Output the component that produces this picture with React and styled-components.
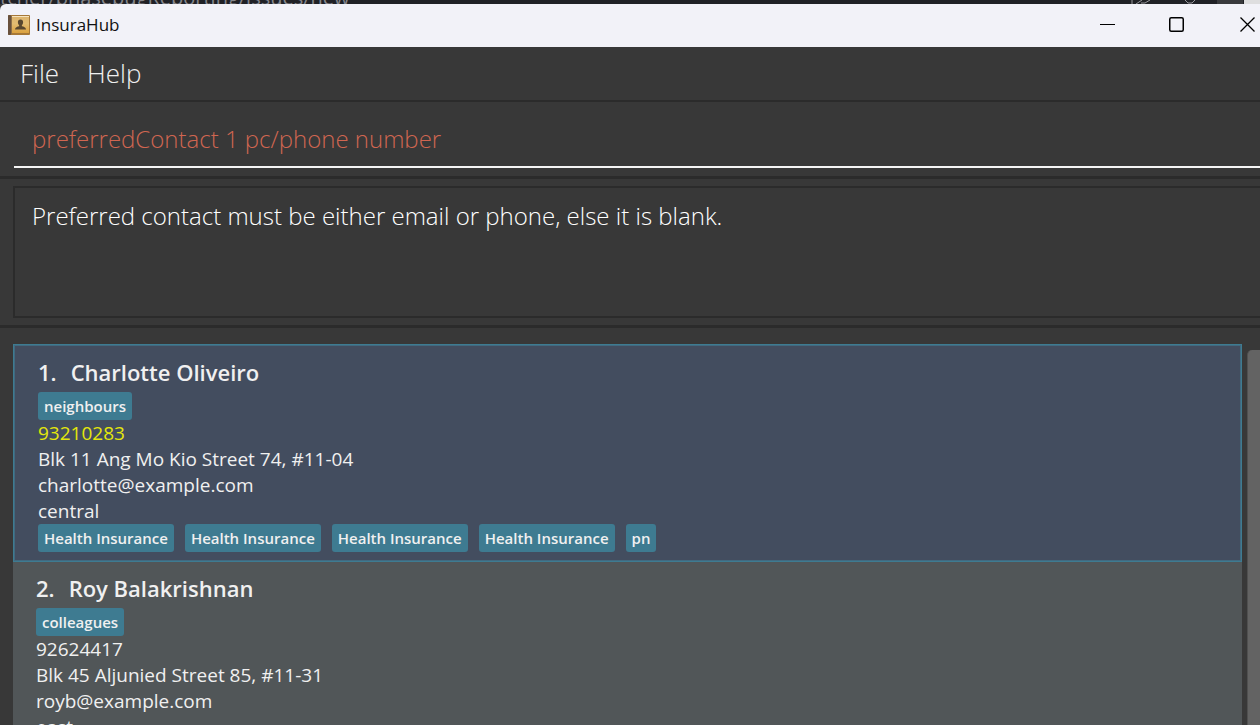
import React from "react";
import styled, { createGlobalStyle } from "styled-components";

const GlobalStyle = createGlobalStyle`
  *, *::before, *::after { box-sizing: border-box; }
  body {
    margin: 0;
    background: #383838;
    font-family: "Open Sans", "Noto Sans", sans-serif;
    overflow: hidden;
  }
`;

const Screen = styled.div`
  display: flex;
  flex-direction: column;
  height: 100vh;
  overflow: hidden;
`;

const Backdrop = styled.div`
  display: flex;
  align-items: flex-end;
  justify-content: space-between;
  flex: none;
  height: 4px;
  overflow: hidden;
  background: #202126;
  color: #85868c;
  font-size: 20px;
  line-height: 12px;
  white-space: nowrap;
`;

const BackdropIcons = styled.svg`
  flex: none;
  width: 130px;
  height: 4px;
`;

const TitleBar = styled.header`
  display: flex;
  align-items: center;
  flex: none;
  height: 43px;
  padding: 0 0 2px 8px;
  background: #f2f2f8;
  border-top-left-radius: 6px;
`;

const AppIcon = styled.svg`
  width: 22px;
  height: 22px;
  margin-right: 6px;
`;

const Title = styled.h1`
  flex: 1;
  margin: 0;
  color: #111;
  font-size: 17px;
  font-weight: 400;
  line-height: 24px;
`;

const WindowButton = styled.button`
  display: flex;
  align-items: center;
  justify-content: ${(p) => (p.$end ? "flex-end" : "center")};
  width: ${(p) => (p.$end ? "49px" : "69px")};
  height: 41px;
  padding: 0;
  padding-right: ${(p) => (p.$end ? "5px" : "0")};
  border: 0;
  background: transparent;
`;

const MenuBar = styled.nav`
  display: flex;
  align-items: center;
  flex: none;
  gap: 28px;
  height: 55px;
  padding: 0 0 2px 20px;
  border-bottom: 2px solid #2b2b2b;
`;

const MenuButton = styled.button`
  padding: 0;
  border: 0;
  background: transparent;
  color: #f0f0f0;
  font-family: inherit;
  font-size: 26px;
  font-weight: 300;
  line-height: 32px;
`;

const CommandPane = styled.form`
  flex: none;
  padding: 10px 0 8px 14px;
  border-bottom: 3px solid #2b2b2b;
`;

const CommandInput = styled.input`
  display: block;
  width: 100%;
  height: 56px;
  padding: 0 18px 2px;
  border: 0;
  border-bottom: 2px solid #f4f4f4;
  outline: 0;
  background: transparent;
  color: #d06651;
  font-family: inherit;
  font-size: 24px;
  font-weight: 300;
`;

const ResultPane = styled.section`
  flex: none;
  padding: 7px 0 7px 13px;
  border-bottom: 3px solid #2b2b2b;
`;

const ResultBox = styled.output`
  display: block;
  height: 132px;
  padding: 12px 17px;
  border: 2px solid #2b2b2b;
  border-right: 0;
  color: #fff;
  font-size: 24px;
  font-weight: 300;
  line-height: 32px;
`;

const ListPane = styled.main`
  display: flex;
  flex: 1;
  gap: 5px;
  min-height: 0;
  padding: 16px 0 0 13px;
  overflow: hidden;
`;

const PersonList = styled.ol`
  flex: 1;
  margin: 0;
  padding: 0;
  list-style: none;
`;

const PersonCard = styled.li`
  padding: ${(p) => (p.$selected ? "9px 24px" : "8px 23px")};
  border: ${(p) => (p.$selected ? "1px solid #3e7b91" : "0")};
  box-shadow: ${(p) => (p.$selected ? "inset 0 0 0 1px #416a80" : "none")};
  background: ${(p) => (p.$selected ? "#434d5f" : "#515658")};
  color: #f0f0f0;
`;

const PersonName = styled.h2`
  display: flex;
  gap: 14px;
  margin: 0;
  padding-bottom: 2px;
  font-size: 22px;
  font-weight: 600;
  line-height: 36px;
`;

const TagRow = styled.div`
  display: flex;
  gap: 11px;
`;

const Tag = styled.span`
  padding: 0 6px;
  border-radius: 3px;
  background: #3e7b91;
  font-size: 15px;
  font-weight: 600;
  line-height: 28px;
`;

const Detail = styled.p`
  margin: 0;
  color: ${(p) => (p.$preferred ? "#e4e70b" : "inherit")};
  font-size: 19px;
  line-height: 26px;
`;

const ScrollTrack = styled.div`
  display: flex;
  flex: none;
  width: 13px;
  padding-top: 6px;
`;

const ScrollThumb = styled.div`
  flex: 1;
  border-left: 1px solid #505050;
  border-top-left-radius: 5px;
  background: #636363;
`;

const people = [
  {
    name: "Charlotte Oliveiro",
    groups: ["neighbours"],
    phone: "93210283",
    address: "Blk 11 Ang Mo Kio Street 74, #11-04",
    email: "charlotte@example.com",
    region: "central",
    policies: ["Health Insurance", "Health Insurance", "Health Insurance", "Health Insurance", "pn"],
    selected: true,
  },
  {
    name: "Roy Balakrishnan",
    groups: ["colleagues"],
    phone: "92624417",
    address: "Blk 45 Aljunied Street 85, #11-31",
    email: "royb@example.com",
    region: "east",
    policies: [],
    selected: false,
  },
];

function Tags({ items }) {
  return (
    <TagRow>
      {items.map((item, i) => (
        <Tag key={i}>{item}</Tag>
      ))}
    </TagRow>
  );
}

function Person({ person, index }) {
  return (
    <PersonCard $selected={person.selected}>
      <PersonName>
        <span>{index}.</span>
        <span>{person.name}</span>
      </PersonName>
      <Tags items={person.groups} />
      <Detail $preferred={person.selected}>{person.phone}</Detail>
      <Detail>{person.address}</Detail>
      <Detail>{person.email}</Detail>
      <Detail>{person.region}</Detail>
      <Tags items={person.policies} />
    </PersonCard>
  );
}

function BookIcon() {
  return (
    <AppIcon viewBox="0 0 22 22" aria-hidden="true">
      <defs>
        <linearGradient id="cover" x1="0" y1="0" x2="0" y2="1">
          <stop offset="0" stopColor="#dcb36c" />
          <stop offset=".45" stopColor="#e2bc72" />
          <stop offset="1" stopColor="#dba13f" />
        </linearGradient>
      </defs>
      <rect x="0" y="1" width="22" height="20" rx="1" fill="#a67838" />
      <rect x="4" y="2" width="17" height="17" fill="url(#cover)" />
      <rect x="2" y="2" width="19" height="1" fill="#f6e3bd" />
      <rect x="0" y="1" width="3" height="20" rx="1" fill="#68503d" />
      <rect x="3" y="2" width="1" height="18" fill="#8d7049" />
      <path
        d="M12.5 5.5c1.7 0 2.6 1.1 2.6 2.7 0 1.3-.6 2.3-1.2 2.9v1.2c1.7.5 3.9.8 4.1 3.2H7c.2-2.4 2.4-2.7 4.1-3.2v-1.2c-.6-.6-1.2-1.6-1.2-2.9 0-1.6.9-2.7 2.6-2.7z"
        fill="#57462f"
      />
    </AppIcon>
  );
}

export default function App() {
  return (
    <>
      <GlobalStyle />
      <Screen>
        <Backdrop>
          <span>tcher/phasebugReporting/issues/new</span>
          <BackdropIcons viewBox="0 0 130 4" aria-hidden="true">
            <path d="M2 0v4M6 4L12 0M11 3h4l5-3M55 0l3 3h4l3-3" fill="none" stroke="#99999d" />
            <rect x="87" width="26" height="4" fill="#393a3d" />
            <rect x="114" width="16" height="4" fill="#dededf" />
          </BackdropIcons>
        </Backdrop>
        <TitleBar>
          <BookIcon />
          <Title>InsuraHub</Title>
          <WindowButton type="button" aria-label="Minimize">
            <svg width="15" height="15" viewBox="0 0 15 15" aria-hidden="true">
              <path d="M0 7.5h15" stroke="#000" />
            </svg>
          </WindowButton>
          <WindowButton type="button" aria-label="Maximize">
            <svg width="15" height="15" viewBox="0 0 15 15" aria-hidden="true">
              <rect x=".75" y=".75" width="13.5" height="13.5" rx="1.5" fill="none" stroke="#000" strokeWidth="1.5" />
            </svg>
          </WindowButton>
          <WindowButton type="button" aria-label="Close" $end>
            <svg width="15" height="15" viewBox="0 0 15 15" aria-hidden="true">
              <path d="M.5.5l14 14M14.5.5l-14 14" stroke="#000" strokeWidth="1.3" />
            </svg>
          </WindowButton>
        </TitleBar>
        <MenuBar>
          <MenuButton type="button">File</MenuButton>
          <MenuButton type="button">Help</MenuButton>
        </MenuBar>
        <CommandPane onSubmit={(e) => e.preventDefault()}>
          <CommandInput
            type="text"
            aria-label="Command"
            spellCheck={false}
            defaultValue="preferredContact 1 pc/phone number"
          />
        </CommandPane>
        <ResultPane>
          <ResultBox>Preferred contact must be either email or phone, else it is blank.</ResultBox>
        </ResultPane>
        <ListPane>
          <PersonList>
            {people.map((person, i) => (
              <Person key={person.name} person={person} index={i + 1} />
            ))}
          </PersonList>
          <ScrollTrack>
            <ScrollThumb />
          </ScrollTrack>
        </ListPane>
      </Screen>
    </>
  );
}
